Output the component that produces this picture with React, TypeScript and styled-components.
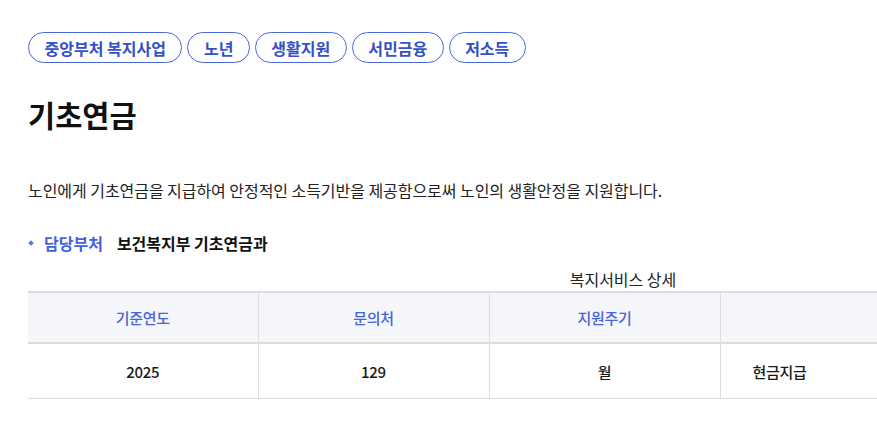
import React from "react";
import styled, { createGlobalStyle } from "styled-components";

const Global = createGlobalStyle`
  html, body {
    margin: 0;
    padding: 0;
    background: #fff;
    overflow: hidden;
  }
  body {
    font-family: "Noto Sans CJK KR", "Noto Sans", sans-serif;
    color: #222;
  }
`;

const Page = styled.main`
  padding: 32px 0 0 28px;
  width: 1200px;
`;

const TagList = styled.ul`
  display: flex;
  gap: 5px;
  list-style: none;
  margin: 0;
  padding: 0;
`;

const Tag = styled.li`
  height: 31px;
  box-sizing: border-box;
  display: flex;
  align-items: center;
  padding: 0 15.5px;
  border: 1px solid #4a68d8;
  border-radius: 16px;
  color: #3451c8;
  font-size: 16px;
  font-weight: 700;
`;

const Title = styled.h1`
  margin: 31px 0 0;
  font-size: 29.5px;
  line-height: 40px;
  font-weight: 700;
  color: #111;
`;

const Desc = styled.p`
  margin: 44px 0 0;
  font-size: 16px;
  line-height: 24px;
  letter-spacing: -0.05px;
  color: #222;
`;

const InfoRow = styled.dl`
  display: flex;
  align-items: center;
  margin: 29px 0 0;
  font-size: 16px;
  line-height: 24px;
  font-weight: 700;
`;

const InfoLabel = styled.dt`
  position: relative;
  padding-left: 16px;
  color: #4462e0;
  margin-right: 14px;
  &::before {
    content: "";
    position: absolute;
    left: 1px;
    top: 50%;
    width: 4px;
    height: 4px;
    background: #5a78e6;
    transform: translateY(-50%) rotate(45deg);
  }
`;

const InfoValue = styled.dd`
  margin: 0;
  color: #111;
`;

const Table = styled.table`
  margin-top: 12px;
  width: 1190px;
  border-collapse: collapse;
  table-layout: fixed;
  font-size: 15px;
  letter-spacing: -0.3px;
`;

const Caption = styled.caption`
  font-size: 16px;
  line-height: 24px;
  letter-spacing: 0;
  color: #222;
`;

const HeadRow = styled.tr`
  background: #f5f6fa;
  border-top: 2px solid #dcdcdc;
  border-bottom: 2px solid #dcdcdc;
`;

const Th = styled.th`
  height: 49px;
  padding: 0;
  font-weight: 500;
  color: #4763d6;
  text-align: center;
  border-left: 1px solid #dcdcdc;
  &:first-child {
    border-left: none;
  }
`;

const BodyRow = styled.tr`
  border-bottom: 1px solid #dcdcdc;
`;

const Td = styled.td<{ $align?: "left" | "center" }>`
  height: 54px;
  padding: ${(p) => (p.$align === "left" ? "0 0 0 32px" : "0")};
  text-align: ${(p) => p.$align ?? "center"};
  font-weight: 500;
  color: #1a1a1a;
  border-left: 1px solid #dcdcdc;
  &:first-child {
    border-left: none;
  }
`;

const tags = ["중앙부처 복지사업", "노년", "생활지원", "서민금융", "저소득"];

export default function App() {
  return (
    <>
      <Global />
      <Page>
        <TagList>
          {tags.map((t) => (
            <Tag key={t}>{t}</Tag>
          ))}
        </TagList>
        <Title>기초연금</Title>
        <Desc>
          노인에게 기초연금을 지급하여 안정적인 소득기반을 제공함으로써 노인의 생활안정을 지원합니다.
        </Desc>
        <InfoRow>
          <InfoLabel>담당부처</InfoLabel>
          <InfoValue>보건복지부 기초연금과</InfoValue>
        </InfoRow>
        <Table>
          <Caption>복지서비스 상세</Caption>
          <colgroup>
            <col style={{ width: 230 }} />
            <col style={{ width: 231 }} />
            <col style={{ width: 231 }} />
            <col />
          </colgroup>
          <thead>
            <HeadRow>
              <Th>기준연도</Th>
              <Th>문의처</Th>
              <Th>지원주기</Th>
              <Th />
            </HeadRow>
          </thead>
          <tbody>
            <BodyRow>
              <Td>2025</Td>
              <Td>129</Td>
              <Td>월</Td>
              <Td $align="left">현금지급</Td>
            </BodyRow>
          </tbody>
        </Table>
      </Page>
    </>
  );
}
